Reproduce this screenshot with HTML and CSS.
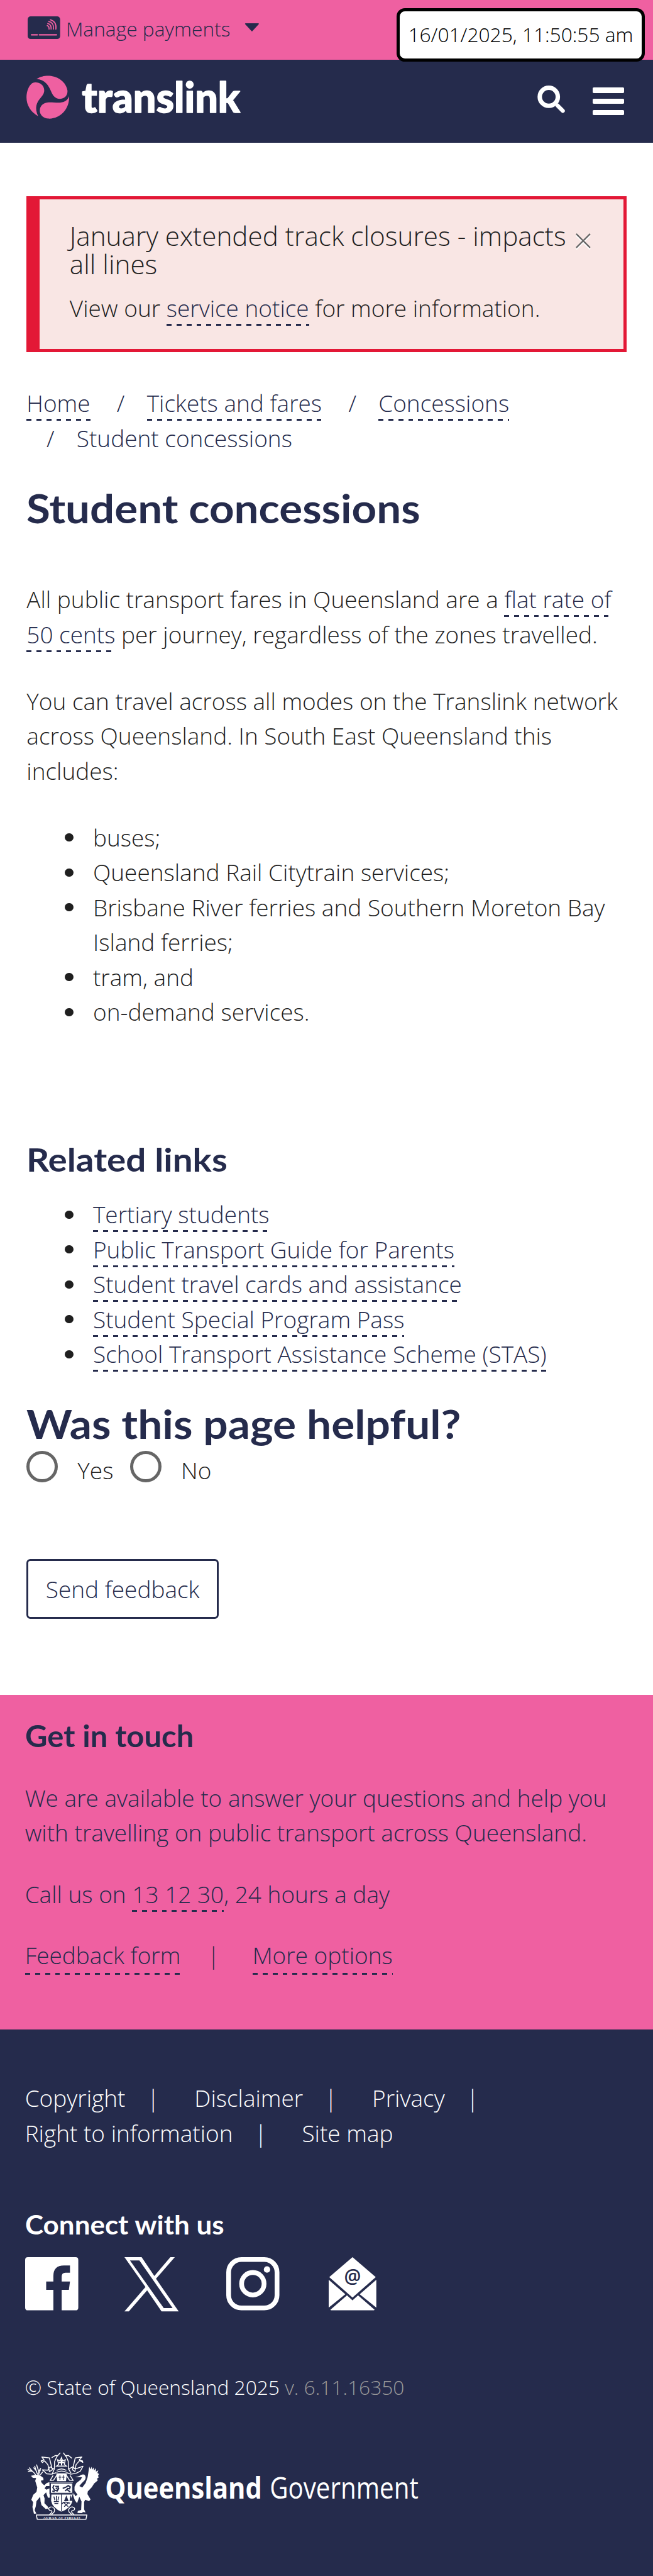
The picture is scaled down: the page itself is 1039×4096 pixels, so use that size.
FILE: index.html
```html
<!DOCTYPE html>
<html lang="en">
<head>
<meta charset="utf-8">
<title>Student concessions | Translink</title>
<link rel="stylesheet" href="styles.css">
</head>
<body>
<div class="topbar">
  <svg class="card-icon" viewBox="0 0 176 123">
    <rect width="176" height="123" rx="16" fill="#252b4c"/>
    <g fill="none" stroke="#ef60a1" stroke-width="6" stroke-linecap="round">
      <path d="M21 100H52M64 100H156" stroke-width="8"/>
      <path d="M106 50Q117 54 116 69M109 39Q129 44 127 69M114 28Q143 34 140 69M123 18Q158 28 153 69"/>
    </g>
  </svg>
  <span class="manage">Manage payments</span>
  <svg class="caret" viewBox="0 0 27 15"><path d="M2 1H25L13.500 13.500Z" fill="#252b4c" stroke="#252b4c" stroke-width="2" stroke-linejoin="round"/></svg>
  <div class="timestamp">16/01/2025, 11:50:55 am</div>
</div>
<header class="navbar">
  <svg class="brand" viewBox="50 375 1180 245">
    <g fill="#ef60a1">
      <path d="M108 398C134 380 165 378 187 381C238 388 271 424 276 460C278 484 262 504 236 505C208 505 196 485 187 464C173 432 155 400 108 398Z"/>
      <path d="M54 498C54 462 67 433 86 419C111 408 150 424 150 458C150 476 141 486 130 500C109 524 96 552 117 599C77 577 54 540 54 498Z"/>
      <path d="M285 491C288 561 236 615 173 612C147 611 125 592 126 567C128 543 142 526 174 524C213 522 266 541 285 491Z"/>
    </g>
    <text class="wordmark" x="354" y="578" textLength="858" lengthAdjust="spacingAndGlyphs">translink</text>
  </svg>
  <svg class="search-icon" viewBox="0 0 150 150"><circle cx="62" cy="61" r="49" fill="none" stroke="#fff" stroke-width="24"/><path d="M110 109L138 137" stroke="#fff" stroke-width="22" stroke-linecap="round"/></svg>
  <div class="menu-icon"><i></i><i></i><i></i></div>
</header>
<main>
  <section class="alert">
    <div class="alert-head">
      <h4>January extended track closures - impacts all lines</h4>
      <svg class="close" viewBox="0 0 27 30"><path d="M1 4L26 29M26 4L1 29" stroke="#fff" stroke-width="2.500"/><path d="M1 1L26 26M26 1L1 26" stroke="#666" stroke-width="2.500"/></svg>
    </div>
    <p>View our <a>service notice</a> for more information.</p>
  </section>
  <ol class="breadcrumb">
    <li><a>Home</a></li><li><a>Tickets and fares</a></li><li><a>Concessions</a></li><li>Student concessions</li>
  </ol>
  <h1 class="h1-title">Student concessions</h1>
  <div class="copy">
    <p>All public transport fares in Queensland are a <a>flat rate of<br>50 cents</a> per journey, regardless of the zones travelled.</p>
    <p>You can travel across all modes on the Translink network across Queensland. In South East Queensland this includes:</p>
    <ul>
      <li>buses;</li>
      <li>Queensland Rail Citytrain services;</li>
      <li>Brisbane River ferries and Southern Moreton Bay Island ferries;</li>
      <li>tram, and</li>
      <li>on-demand services.</li>
    </ul>
  </div>
  <h2 class="related-title">Related links</h2>
  <ul class="related">
    <li><a>Tertiary students</a></li>
    <li><a>Public Transport Guide for Parents</a></li>
    <li><a>Student travel cards and assistance</a></li>
    <li><a>Student Special Program Pass</a></li>
    <li><a>School Transport Assistance Scheme (STAS)</a></li>
  </ul>
  <h2 class="helpful-title">Was this page helpful?</h2>
  <div class="radios">
    <label><i></i><span>Yes</span></label>
    <label><i></i><span>No</span></label>
  </div>
  <button class="send">Send feedback</button>
</main>
<section class="touch">
  <h3>Get in touch</h3>
  <p>We are available to answer your questions and help you with travelling on public transport across Queensland.</p>
  <p>Call us on <a>13 12 30</a>, 24 hours a day</p>
  <div class="touch-links"><a>Feedback form</a><span>|</span><a>More options</a></div>
</section>
<footer>
  <ul class="foot-nav"><li>Copyright</li><li>Disclaimer</li><li>Privacy</li><li>Right to information</li><li>Site map</li></ul>
  <h4>Connect with us</h4>
  <div class="social">
    <svg viewBox="0 0 96 96"><path fill="#fff" d="M5 0H91Q96 0 96 5V91Q96 96 91 96H66V59H79L81 44H66V35Q66 28 73 28H81V15H70Q51 15 51 34V44H38V59H51V96H5Q0 96 0 91V5Q0 0 5 0Z"/></svg>
    <svg class="x" viewBox="0 0 98 98"><path fill="#fff" fill-rule="evenodd" d="M0 0H31L54 34L83 0H91L57 39L98 98H67L41 60L8 98H0L38 54ZM10 6L71 92H87L27 6Z"/></svg>
    <svg viewBox="0 0 96 96"><g fill="none" stroke="#fff" stroke-width="8.600"><rect x="4.300" y="4.300" width="87.400" height="87.400" rx="23"/><circle cx="48" cy="48" r="20.300"/></g><circle cx="73.600" cy="22.400" r="5.800" fill="#fff"/></svg>
    <svg class="mail" viewBox="0 0 86 96"><g fill="#fff"><path d="M43 0L85 36L43 73L1 36Z"/><path d="M0 41L30 67L0 91ZM86 41L56 67L86 91Z"/><path d="M3 95L33 69L43 78L53 69L83 95Q82 96 80 96H6Q4 96 3 95Z"/></g><text x="43" y="47" class="at">@</text></svg>
  </div>
  <p class="legal">© State of Queensland 2025 <span>v. 6.11.16350</span></p>
  <svg class="gov" viewBox="50 75 2150 375">
    <g fill="#fff">
      <path d="M78 207L103 200L125 203L145 218L146 230L131 233L137 246L150 258L163 246L180 240V262L160 262L152 275L162 282L180 274V325L170 325L160 296L146 312L152 330L151 355L168 372L172 384L158 387L135 365L130 345L128 320L108 344L104 372L98 393L107 411L94 412L86 376L90 350L80 336L90 310L108 294L112 270L101 234L106 219L88 218Z"/>
      <path d="M317 215L340 208Q352 196 367 200Q380 212 370 230L352 248L340 262L356 270L374 246L385 215L394 157L400 172L407 158L410 174L418 161L420 178L430 165L430 184L443 177L438 192L447 197L441 208L446 215L436 222L440 232L420 249L408 268L386 291L384 306L401 335L393 344L372 336L366 348V388L374 405L361 403L353 409L330 408L332 397L350 392L352 346L340 320L328 355L316 340L306 312L306 294L319 318L330 308L314 286V266L324 246L347 228L355 215L345 214Z"/>
    </g>
    <g fill="none" stroke="#fff" stroke-width="5" stroke-linejoin="round">
      <path d="M103 201L92 187L60 171M90 187L68 162M81 181L62 183M115 200L108 186L98 153M110 184L92 162M121 202L119 180L108 146M122 193L130 172M129 201L142 185M120 181L132 165"/>
      <path d="M237 82L218 103L206 130L205 168L193 198M253 82L270 105L280 128L281 168L295 192M190 109L211 97L223 97M265 97L282 97L300 112"/>
      <path d="M133 126L149 121L137 105L178 110L194 174L178 184L170 147L152 126L140 135ZM205 172L182 158L169 176L140 175L152 185L163 196L188 198L215 190M357 126L339 121L354 105L318 110L303 174L316 184L322 147L342 124L359 134ZM281 172L304 158L318 170L360 155L345 182L323 193L294 198L272 190"/>
      <path d="M217 178Q244 161 270 178M217 188Q244 174 271 188M216 196H272M222 197L200 231L182 232L198 205M266 197L287 231L307 232L290 205"/>
      <path d="M189 375Q166 380 178 393Q196 394 190 406L177 418M192 375Q212 382 204 402L188 418M299 375Q323 380 311 393Q293 394 300 406L312 418M298 375Q277 382 284 402L301 418"/>
      <path d="M107 419H381L376 442H112Z"/>
    </g>
    <path fill="#fff" d="M216 198H272L268 236H220Z"/>
    <path d="M235 204V228M228 214H242M253 204V228M246 214H260" stroke="#252b4c" stroke-width="4"/>
    <path d="M243 108L250 126L264 120L259 145L270 154H217L228 145L222 120L237 126Z" fill="none" stroke="#fff" stroke-width="5"/>
    <path d="M228 135H259M244 120V151" stroke="#fff" stroke-width="7"/>
    <path d="M180 242H307V304L300 322L304 345Q296 382 243 404Q192 382 185 342L187 304H180Z" fill="#fff" stroke="#252b4c" stroke-width="4"/>
    <g fill="none" stroke="#252b4c" stroke-width="4"><path d="M187 306H302M243 306V400M184 247H303V301H184Z"/><path d="M203 257L197 270L205 284L220 289L228 276L221 262M194 289L206 293M209 264H230M213 272L225 283M250 275L268 268L280 260L291 267L287 277L273 275M263 288L273 281L291 294" stroke-width="7"/><path d="M202 319L208 340M216 316V344M229 319L224 340M202 347H229M205 357H226M246 359Q252 348 268 349L290 355M258 354L280 374M280 354L258 374" stroke-width="5"/></g>
    <path d="M270 313L282 344H257ZM292 310L303 342H287Z" fill="#252b4c"/>
    <text class="motto" x="145" y="438" textLength="200">AUDAX AT FIDELIS</text>
    <text class="gov-bold" x="480" y="331" textLength="850" lengthAdjust="spacingAndGlyphs">Queensland</text>
    <text class="gov-light" x="1372" y="331" textLength="806" lengthAdjust="spacingAndGlyphs">Government</text>
  </svg>
</footer>
</body>
</html>
```
FILE: styles.css
```css
/* 1rem is ten design pixels */
html { font-size: 8.8086px; }
* { box-sizing: border-box; }
body { margin: 0; min-height: 100vh; display: flex; flex-direction: column; background: #fff; color: #1f1f1f; font: 300 4.2rem/6.3rem "Open Sans", sans-serif; }
h1, h2, h3, h4, p, ul, ol { margin: 0; padding: 0; }
svg { display: block; flex: none; overflow: visible; }
h1, h2, h3, footer h4 { width: max-content; font-family: Lato, sans-serif; font-weight: 700; color: #252b4c; white-space: nowrap; transform-origin: 0 50%; }

a { color: #252b4c; padding-bottom: 3px; background: repeating-linear-gradient(90deg, #252b4c 0 .9rem, transparent .9rem 1.8rem) 0 100% / 100% 3px no-repeat; -webkit-box-decoration-break: clone; box-decoration-break: clone; }

.topbar { position: relative; height: 10.8rem; padding: 2.47rem 0 0 4.95rem; display: flex; align-items: flex-start; background: #ef60a1; color: #252b4c; font-size: 3.6rem; line-height: 5.4rem; }
.card-icon { width: 5.87rem; height: 4.1rem; margin-top: .43rem; }
.manage { margin-left: 1.1rem; width: 30.1rem; white-space: nowrap; }
.caret { width: 2.7rem; height: 1.5rem; margin: 1.75rem 0 0 2.1rem; }
.timestamp { position: absolute; top: 1.5rem; right: 1.5rem; width: 44.8rem; height: 9.6rem; border: .6rem solid #000; border-radius: 1.5rem; background: #fff; color: #000; line-height: 8.4rem; text-align: center; white-space: nowrap; z-index: 1; }

.navbar { height: 15rem; background: #252b4c; display: flex; align-items: flex-start; }
.brand { width: 39.33rem; height: 8.17rem; margin: 2.7rem 0 0 4.67rem; }
.wordmark { font: 900 226px Lato, sans-serif; fill: #fff; stroke: #fff; stroke-width: 5; stroke-linejoin: round; }
.search-icon { width: 5rem; height: 5rem; margin: 4.6rem 0 0 auto; }
.menu-icon { width: 5.7rem; height: 5rem; margin: 5rem 5.2rem 0 5rem; display: flex; flex-direction: column; justify-content: space-between; }
.menu-icon i { height: .97rem; border-radius: .2rem; background: #fff; }

main { padding: 9.6rem 4.8rem 0; height: 280.2rem; }
.alert { height: 28.2rem; border: .6rem solid #e31836; border-left-width: 2.4rem; background: #f9e6e4; padding: 4.1rem 5.8rem 0 5.4rem; }
.alert-head { display: flex; align-items: flex-start; }
.alert h4 { width: 91.4rem; font-weight: 300; font-size: 4.8rem; line-height: 5.1rem; }
.close { width: 2.7rem; height: 3rem; margin-top: 2rem; }
.alert p { margin-top: 2.2rem; }

.breadcrumb { margin-top: 6rem; list-style: none; display: flex; flex-wrap: wrap; color: #252b4c; }
.breadcrumb li { margin-right: 1.2rem; }
.breadcrumb li + li::before { content: "/"; padding: 0 4rem 0 3.6rem; }

.h1-title { margin-top: 5.55rem; font-size: 7.2rem; line-height: 7.92rem; transform: scaleX(1.09); }
.copy { margin-top: 9.35rem; }
.copy p { margin-bottom: 5.75rem; }
.copy ul, .related { padding-left: 12rem; list-style: none; }
.copy li::before, .related li::before { content: ""; display: inline-block; width: 1.5rem; height: 1.5rem; margin: 0 3.57rem 0 -5.07rem; border-radius: 50%; background: #1f1f1f; vertical-align: .85rem; }
.related-title { margin-top: 20.3rem; font-size: 5.9rem; line-height: 6.3rem; transform: scaleX(1.09); }
.related { margin-top: 3.65rem; }
.helpful-title { margin-top: 5.5rem; font-size: 7.2rem; line-height: 7.92rem; transform: scaleX(1.095); }
.radios { display: flex; margin-top: .93rem; height: 5.7rem; }
.radios label { display: flex; width: 18.7rem; }
.radios i { width: 5.7rem; height: 5.7rem; border: .6rem solid #666; border-radius: 50%; }
.radios span { margin: .3rem 0 0 3.5rem; }
.send { display: block; margin-top: 13.8rem; width: 34.7rem; height: 10.8rem; padding: 0; border: 3px solid #252b4c; border-radius: .7rem; background: #fff; color: #252b4c; font: inherit; white-space: nowrap; }

.touch { height: 60.3rem; padding: 4.4rem 4.5rem 0; background: #ef60a1; color: #252b4c; }
.touch h3 { font-size: 5.4rem; line-height: 6rem; margin-bottom: 4.95rem; transform: scaleX(1.03); }
.touch p { margin-bottom: 4.78rem; }
.touch-links { display: flex; }
.touch-links span { margin: 0 5.9rem 0 4.8rem; }

footer { flex: 1; padding: 9.3rem 4.5rem 0; background: #252b4c; color: #fff; }
.foot-nav { list-style: none; display: flex; flex-wrap: wrap; }
.foot-nav li:not(:last-child)::after { content: "|"; padding: 0 6.3rem 0 3.9rem; }
footer h4 { color: #fff; margin-top: 10.6rem; font-size: 4.8rem; line-height: 5.4rem; transform: scaleX(1.04); }
.social { display: flex; margin-top: 3.3rem; }
.social svg { width: 9.6rem; height: 9.6rem; margin-right: 8.6rem; }
.social svg:first-child { margin-right: 8.4rem; }
.social .x { width: 9.8rem; height: 9.8rem; }
.social .mail { width: 8.6rem; margin-left: .3rem; }
.at { font: 600 34px "Open Sans", sans-serif; fill: #252b4c; text-anchor: middle; }
.legal { margin-top: 10.8rem; font-size: 3.6rem; line-height: 5.6rem; }
.legal span { color: #999; }
.gov { width: 71.67rem; height: 12.5rem; margin: 8.8rem 0 0 .17rem; }
.motto { font: 700 17px "Liberation Serif", serif; fill: #fff; }
.gov-bold { font: 700 160px "Open Sans", sans-serif; fill: #fff; }
.gov-light { font: 400 160px "Open Sans", sans-serif; fill: #fff; }
```
